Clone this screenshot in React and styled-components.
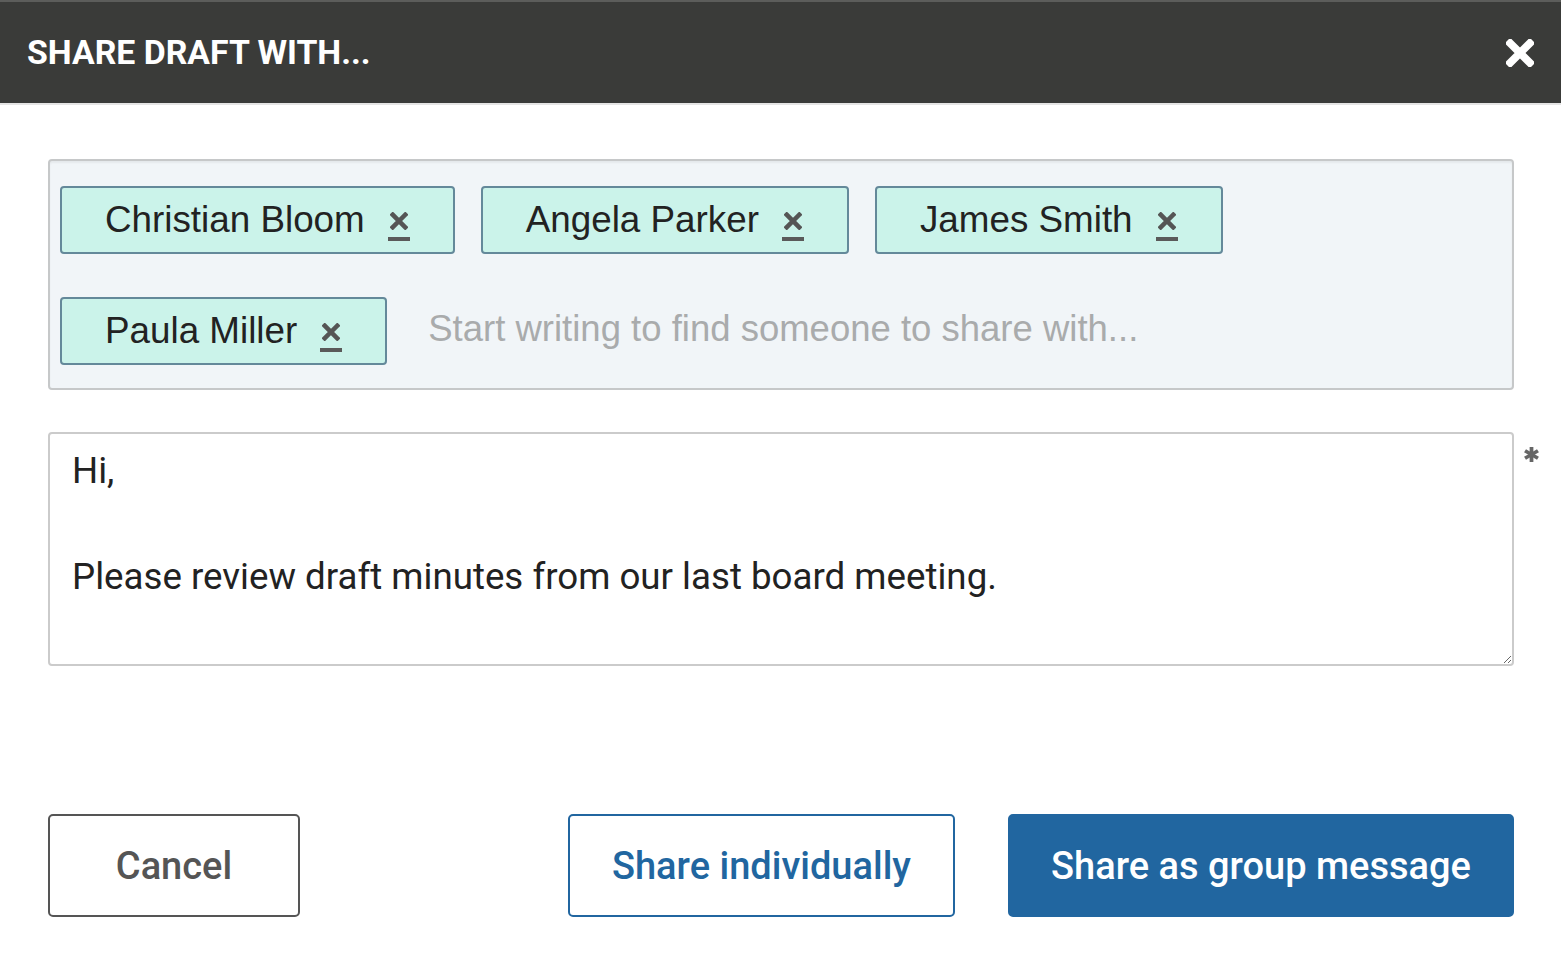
import React from 'react'
import styled, { createGlobalStyle } from 'styled-components'

const GlobalStyle = createGlobalStyle`
    body {
        margin: 0;
        background: #ffffff;
        font-family: Roboto, "Liberation Sans", sans-serif;
    }
`

const Dialog = styled.div`
    width: 1561px;
    min-height: 964px;
    background: #fff;
`
const Header = styled.div`
    height: 101px;
    border-top: 2px solid #5c5d5b;
    border-bottom: 2px solid #e4e4e4;
    background: #3a3b39;
    display: flex;
    align-items: center;
    justify-content: space-between;
    padding: 0 27px;
`
const Title = styled.h1`
    margin: 0;
    font-family: Roboto, sans-serif;
    font-weight: 700;
    font-size: 33.8px;
    color: #fff;
`
const Close = styled.button`
    border: 0;
    background: none;
    padding: 0;
    width: 28px;
    height: 28px;
    cursor: pointer;
    display: flex;
`
const Body = styled.div`
    padding: 54px 47px 0 48px;
    display: flex;
    flex-direction: column;
`
const TagBox = styled.div`
    border: 2px solid #c6c8c9;
    border-radius: 4px;
    background: #f1f5f8;
    box-shadow: inset 0 2px 2px rgba(0, 0, 0, 0.05);
    padding: 25px 10px 23px;
    display: flex;
    flex-wrap: wrap;
    align-items: center;
    column-gap: 26px;
    row-gap: 43px;
`
const Tag = styled.div`
    height: 64px;
    box-sizing: content-box;
    border: 2px solid #64899a;
    border-radius: 4px;
    background: #cbf3ea;
    display: flex;
    align-items: center;
    padding: 0 43px 0 43px;
    gap: 23px;
    font-family: "Liberation Sans", Arial, sans-serif;
    font-size: 36.8px;
    color: #222;
`
const Remove = styled.span`
    display: flex;
    flex-direction: column;
    align-items: center;
    width: 22px;
    gap: 7px;
    margin-top: 12px;
    &::after {
        content: '';
        width: 22px;
        height: 4px;
        background: #5a5a5a;
    }
`
const Placeholder = styled.input`
    flex: 1;
    min-width: 300px;
    border: 0;
    background: transparent;
    outline: none;
    padding: 0 0 4px 15px;
    font-family: "Liberation Sans", Arial, sans-serif;
    font-size: 36.5px;
    color: #222;
    &::placeholder {
        color: #a9abac;
    }
`
const Field = styled.div`
    display: flex;
    margin-top: 42px;
`
const Message = styled.textarea`
    flex: 1;
    height: 234px;
    box-sizing: border-box;
    border: 2px solid #cbcbcb;
    border-radius: 4px;
    padding: 10px 22px;
    font-family: Roboto, sans-serif;
    font-size: 36.7px;
    line-height: 53px;
    color: #222;
    resize: vertical;
    outline: none;
`
const Required = styled.span`
    width: 47px;
    margin-right: -47px;
    padding: 15px 0 0 10px;
    box-sizing: border-box;
    line-height: 0;
`
const Actions = styled.div`
    display: flex;
    align-items: center;
    margin-top: 148px;
    gap: 53px;
`
const Button = styled.button`
    height: 103px;
    box-sizing: border-box;
    border-radius: 5px;
    border: 2px solid ${p => p.$border};
    background: ${p => p.$bg || '#fff'};
    color: ${p => p.$color};
    font-family: Roboto, sans-serif;
    font-weight: 500;
    font-size: 38px;
    width: ${p => p.$width}px;
    cursor: pointer;
    &:first-child {
        margin-right: auto;
    }
`

const XIcon = ({ size, color, stroke }) => (
    <svg width={size} height={size} viewBox="0 0 20 20">
        <path d="M3 3 L17 17 M17 3 L3 17" stroke={color} strokeWidth={stroke} strokeLinecap="square" />
    </svg>
)

const Asterisk = () => (
    <svg width="15" height="15" viewBox="0 0 16 16" aria-label="required">
        <g stroke="#666" strokeWidth="4">
            <path d="M8 0 V16" />
            <path d="M1.1 4 L14.9 12" />
            <path d="M14.9 4 L1.1 12" />
        </g>
    </svg>
)

const people = ['Christian Bloom', 'Angela Parker', 'James Smith', 'Paula Miller']

export default function App() {
    return (
        <Dialog>
            <GlobalStyle />
            <Header>
                <Title>SHARE DRAFT WITH...</Title>
                <Close aria-label="Close">
                    <XIcon size={28} color="#fff" stroke={5.5} />
                </Close>
            </Header>
            <Body>
                <TagBox>
                    {people.map(name => (
                        <Tag key={name}>
                            {name}
                            <Remove>
                                <XIcon size={18} color="#555" stroke={5} />
                            </Remove>
                        </Tag>
                    ))}
                    <Placeholder placeholder="Start writing to find someone to share with..." />
                </TagBox>
                <Field>
                    <Message defaultValue={'Hi,\n\nPlease review draft minutes from our last board meeting.'} />
                    <Required><Asterisk /></Required>
                </Field>
                <Actions>
                    <Button $border="#555" $color="#555" $width={252}>Cancel</Button>
                    <Button $border="#2166a0" $color="#2166a0" $width={387}>Share individually</Button>
                    <Button $border="#2166a0" $bg="#2166a0" $color="#fff" $width={506}>Share as group message</Button>
                </Actions>
            </Body>
        </Dialog>
    )
}
